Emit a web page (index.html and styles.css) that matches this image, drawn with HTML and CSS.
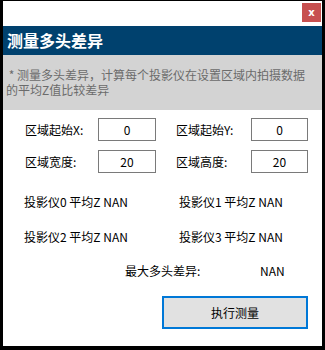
FILE: index.html
```html
<!DOCTYPE html>
<html lang="zh-CN">

<head>
    <meta charset="UTF-8">
    <meta name="viewport" content="width=device-width, initial-scale=1.0">
    <title>测量多头差异</title>
    <link rel="stylesheet" href="styles.css">
</head>

<body>
    <div class="window">
        <div class="titlebar">
            <button class="close">x</button>
        </div>
        <div class="header">测量多头差异</div>
        <div class="desc"> * 测量多头差异，计算每个投影仪在设置区域内拍摄数据<br>的平均Z值比较差异</div>

        <div class="form">
            <label for="startX">区域起始X:</label>
            <input type="text" id="startX" value="0">
            <label for="startY">区域起始Y:</label>
            <input type="text" id="startY" value="0">
            <label for="width">区域宽度:</label>
            <input type="text" id="width" value="20">
            <label for="height">区域高度:</label>
            <input type="text" id="height" value="20">
        </div>

        <div class="results">
            <div class="result">投影仪0 平均Z NAN</div>
            <div class="result">投影仪1 平均Z NAN</div>
            <div class="result">投影仪2 平均Z NAN</div>
            <div class="result">投影仪3 平均Z NAN</div>
        </div>

        <div class="max-diff">
            <span class="max-label">最大多头差异:</span>
            <span class="max-value">NAN</span>
        </div>

        <div class="actions">
            <button class="run">执行测量</button>
        </div>
    </div>
</body>

</html>
```

FILE: styles.css
```css
body {
    margin: 0;
    background-color: #000;
    font-family: "Noto Sans CJK SC", "Microsoft YaHei", sans-serif;
    font-size: 12px;
    color: #000;
}

.window {
    margin: 1px 3px 0 3px;
    width: 319px;
    height: 345px;
    background-color: #fff;
    overflow: hidden;
}

.titlebar {
    height: 25px;
    display: flex;
    justify-content: flex-end;
    align-items: flex-start;
}

.close {
    margin: 2px 1px 0 0;
    width: 19px;
    height: 19px;
    padding: 0;
    border: none;
    background-color: #c75050;
    color: #fff;
    font-family: "DejaVu Sans", sans-serif;
    font-weight: bold;
    font-size: 10px;
    line-height: 17px;
}

.header {
    height: 29px;
    padding-left: 4px;
    background-color: #00416e;
    color: #fff;
    font-size: 16px;
    font-weight: bold;
    line-height: 29px;
}

.desc {
    height: 55px;
    box-sizing: border-box;
    padding: 12px 0 0 3px;
    background-color: #d3d3d3;
    color: #6b6b6b;
    line-height: 15px;
    white-space: pre-wrap;
}

.form {
    display: grid;
    grid-template-columns: 73px 78px 75px 57px;
    grid-auto-rows: 23px;
    row-gap: 9px;
    align-items: center;
    padding: 8px 0 0 22px;
}

.form input {
    box-sizing: border-box;
    width: 58px;
    height: 23px;
    border: 1px solid #7a7a7a;
    padding: 0;
    font-family: inherit;
    font-size: 12px;
    text-align: center;
}

.form input:nth-of-type(2n) {
    width: 57px;
}

.results {
    display: grid;
    grid-template-columns: 155px auto;
    grid-auto-rows: 35px;
    align-items: center;
    padding: 11px 0 0 21px;
}

.max-diff {
    display: flex;
    align-items: center;
    height: 32px;
    padding-left: 122px;
}

.max-label {
    width: 135px;
}

.actions {
    display: flex;
    justify-content: flex-end;
    padding: 10px 14px 0 0;
}

.run {
    width: 146px;
    height: 33px;
    border: 2px solid #0078d7;
    background-color: #e1e1e1;
    font-family: inherit;
    font-size: 12px;
    color: #000;
}
```
